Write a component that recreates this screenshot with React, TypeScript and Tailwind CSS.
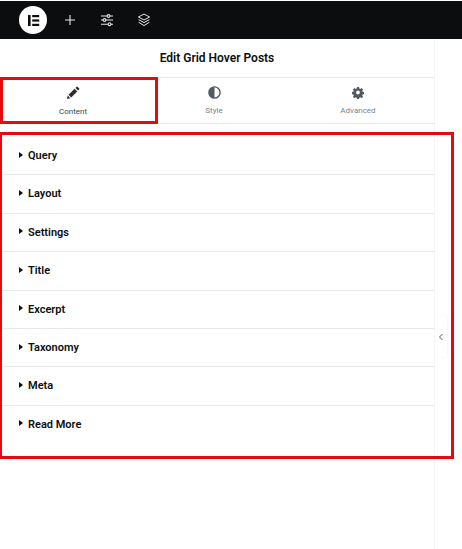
const sections = ["Query", "Layout", "Settings", "Title", "Excerpt", "Taxonomy", "Meta", "Read More"];

export default function App() {
  return (
    <div className="relative w-[462px] h-[549px] overflow-hidden bg-white font-['Roboto',sans-serif]">
      {/* top bar */}
      <div className="mt-px h-[38px] bg-[#0c0d0e] flex items-center pl-[19px]">
        <div className="w-7 h-7 rounded-full bg-white flex items-center justify-center">
          <svg width="13" height="13" viewBox="0 0 13 13" fill="#0c0d0e">
            <rect x="1" y="1" width="2.6" height="11" />
            <rect x="5.2" y="1" width="7" height="2.2" />
            <rect x="5.2" y="5.4" width="7" height="2.2" />
            <rect x="5.2" y="9.8" width="7" height="2.2" />
          </svg>
        </div>
        <svg className="ml-[17px]" width="12" height="12" viewBox="0 0 12 12" stroke="#e6e8ea" strokeWidth="1.1">
          <path d="M6 1v10M1 6h10" />
        </svg>
        <svg className="ml-[24px]" width="14" height="14" viewBox="0 0 14 14" stroke="#e6e8ea" strokeWidth="1.1" fill="#0c0d0e">
          <path d="M1 3h12M1 7h12M1 11.2h12" />
          <circle cx="8.5" cy="3" r="1.4" />
          <circle cx="4.5" cy="7" r="1.4" />
          <circle cx="9.5" cy="11.2" r="1.4" />
        </svg>
        <svg className="ml-[23px]" width="14" height="14" viewBox="0 0 14 14" stroke="#e6e8ea" strokeWidth="1" fill="none" strokeLinejoin="round">
          <path d="M7 1l5.6 3L7 7 1.4 4z" />
          <path d="M1.6 6.6L7 9.6l5.4-3" />
          <path d="M1.6 9.2L7 12.6l5.4-3.4" />
        </svg>
      </div>

      {/* panel */}
      <div className="w-[435px] h-[510px] border-r border-[#f3f4f5]">
        <div className="h-[39px] flex items-center justify-center border-b border-[#e6e8ea] text-[12px] font-semibold text-[#0c0d0e]">
          Edit Grid Hover Posts
        </div>
        <div className="h-[46px] flex border-b border-[#e6e8ea]">
          <div className="w-[146px] flex flex-col items-center pt-[8px] text-[#3f444b]">
            <svg width="14" height="14" viewBox="0 0 14 14" fill="#2b2f33">
              <path d="M1 13l.7-3.4 2.7 2.7zM2.5 8.8L8.6 2.7l2.7 2.7-6.1 6.1zM9.4 1.9l1-1a.9.9 0 0 1 1.3 0l1.4 1.4a.9.9 0 0 1 0 1.3l-1 1z" />
            </svg>
            <span className="mt-[6px] text-[8px] leading-[12px] font-normal">Content</span>
          </div>
          <div className="w-[136px] flex flex-col items-center pt-[8px] text-[#7a838c]">
            <svg width="13" height="13" viewBox="0 0 13 13">
              <circle cx="6.5" cy="6.5" r="5.6" fill="none" stroke="#515962" strokeWidth="1.4" />
              <path d="M6.5 1a5.5 5.5 0 0 1 0 11z" fill="#515962" transform="rotate(180 6.5 6.5)" />
            </svg>
            <span className="mt-[6px] text-[8px] leading-[12px]">Style</span>
          </div>
          <div className="flex-1 flex flex-col items-center pt-[8px] text-[#7a838c]">
            <svg width="12" height="13" viewBox="0 0 24 24" fill="#515962">
              <path
                fillRule="evenodd"
                d="M10 1h4l.6 3 2.1.9 2.6-1.7 2.8 2.8-1.7 2.6.9 2.1 3 .6v4l-3 .6-.9 2.1 1.7 2.6-2.8 2.8-2.6-1.7-2.1.9-.6 3h-4l-.6-3-2.1-.9-2.6 1.7-2.8-2.8 1.7-2.6-.9-2.1-3-.6v-4l3-.6.9-2.1-1.7-2.6 2.8-2.8 2.6 1.7 2.1-.9zM12 8.2a3.8 3.8 0 1 0 0 7.6 3.8 3.8 0 0 0 0-7.6z"
              />
            </svg>
            <span className="mt-[6px] text-[8px] leading-[12px]">Advanced</span>
          </div>
        </div>

        <div className="mt-[13px]">
          {sections.map((name, i) => (
            <div
              key={name}
              className={`h-[38.4px] flex items-center pl-[19px] pt-px border-b ${i < sections.length - 1 ? "border-[#e6e8ea]" : "border-transparent"}`}
            >
              <span className="w-0 h-0 -mt-[3px] border-y-[3.5px] border-y-transparent border-l-[4px] border-l-[#0c0d0e]" />
              <span className="ml-[5px] text-[11px] font-semibold text-[#0c0d0e]">{name}</span>
            </div>
          ))}
        </div>
      </div>

      {/* collapse handle */}
      <div className="absolute left-[435px] top-[316px] w-[12px] h-[41px] bg-white flex items-center justify-center shadow-[1px_0_2px_rgba(0,0,0,0.04)]">
        <svg width="6" height="8" viewBox="0 0 6 8" fill="none" stroke="#515962" strokeWidth="1">
          <path d="M4.5 1L1.5 4l3 3" />
        </svg>
      </div>

      {/* red annotations */}
      <div className="absolute left-0 top-[77px] w-[158px] h-[47px] border-[3px] border-[#e40a0f]" />
      <div className="absolute left-0 top-[132px] w-[454px] h-[327px] border-[3px] border-l-2 border-[#e40a0f]" />
    </div>
  );
}
